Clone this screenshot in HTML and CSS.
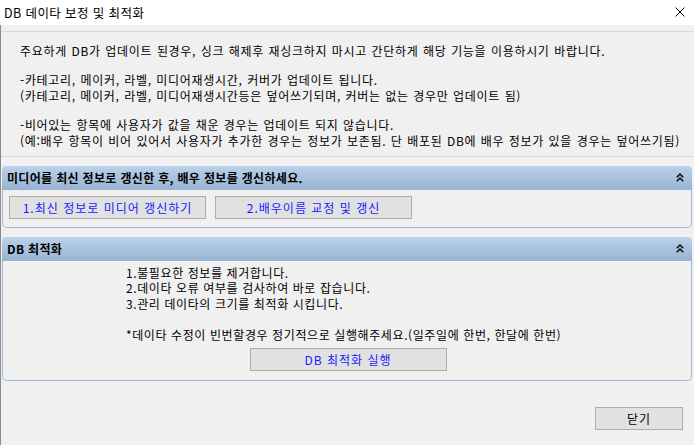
FILE: index.html
```html
<!DOCTYPE html>
<html lang="ko">
<head>
  <meta charset="UTF-8">
  <title>DB 데이타 보정 및 최적화</title>
  <link rel="stylesheet" href="styles.css">
</head>
<body>
  <div class="window">
    <div class="titlebar">
      <span class="title">DB 데이타 보정 및 최적화</span>
      <svg class="close-x" width="10" height="10" viewBox="0 0 10 10">
        <path d="M0.5 0.5 L9.5 9.5 M9.5 0.5 L0.5 9.5" stroke="#000" stroke-width="1" fill="none"/>
      </svg>
    </div>

    <div class="content">
      <div class="intro">
        <p>주요하게 DB가 업데이트 된경우, 싱크 해제후 재싱크하지 마시고 간단하게 해당 기능을 이용하시기 바랍니다.</p>
        <p>-카테고리, 메이커, 라벨, 미디어재생시간, 커버가 업데이트 됩니다.<br>(카테고리, 메이커, 라벨, 미디어재생시간등은 덮어쓰기되며, 커버는 없는 경우만 업데이트 됨)</p>
        <p>-비어있는 항목에 사용자가 값을 채운 경우는 업데이트 되지 않습니다.<br>(예:배우 항목이 비어 있어서 사용자가 추가한 경우는 정보가 보존됨. 단 배포된 DB에 배우 정보가 있을 경우는 덮어쓰기됨)</p>
      </div>

      <div class="panel">
        <div class="panel-head">
          <span>미디어를 최신 정보로 갱신한 후, 배우 정보를 갱신하세요.</span>
          <svg class="chev" width="8" height="9" viewBox="0 0 8 9">
            <path d="M0.8 4.2 L4 1 L7.2 4.2 M0.8 8.2 L4 5 L7.2 8.2" stroke="#000" stroke-width="1.4" fill="none"/>
          </svg>
        </div>
        <div class="panel-body buttons">
          <button class="btn link">1.최신 정보로 미디어 갱신하기</button>
          <button class="btn link">2.배우이름 교정 및 갱신</button>
        </div>
      </div>

      <div class="panel">
        <div class="panel-head">
          <span>DB 최적화</span>
          <svg class="chev" width="8" height="9" viewBox="0 0 8 9">
            <path d="M0.8 4.2 L4 1 L7.2 4.2 M0.8 8.2 L4 5 L7.2 8.2" stroke="#000" stroke-width="1.4" fill="none"/>
          </svg>
        </div>
        <div class="panel-body optimize">
          <div class="notes">
            1.불필요한 정보를 제거합니다.<br>
            2.데이타 오류 여부를 검사하여 바로 잡습니다.<br>
            3.관리 데이타의 크기를 최적화 시킵니다.<br>
            <br>
            *데이타 수정이 빈번할경우 정기적으로 실행해주세요.(일주일에 한번, 한달에 한번)
          </div>
          <button class="btn link run">DB 최적화 실행</button>
        </div>
      </div>

      <div class="footer">
        <button class="btn">닫기</button>
      </div>
    </div>
  </div>
</body>
</html>
```

FILE: styles.css
```css
body { margin: 0; background: #f0f0f0; font-family: "Noto Sans CJK KR", "Noto Sans", sans-serif; font-size: 12px; color: #000; }
.window { width: 694px; height: 445px; overflow: hidden; }
.titlebar { height: 25px; background: #fff; display: flex; align-items: center; justify-content: space-between; padding: 0 9px 0 4px; box-sizing: border-box; }
.title { font-size: 12.5px; line-height: 16px; letter-spacing: 0.4px; }
.close-x { margin-top: -2px; }
.content { border-left: 1px solid #8a8a8a; height: 420px; box-sizing: border-box; padding-top: 6px; }
.intro { border-top: 1px solid #d9d9d9; border-bottom: 1px solid #d9d9d9; padding: 11px 0 6px 19px; letter-spacing: 0.7px; word-spacing: 0.5px; }
.intro p { margin: 0 0 12px; line-height: 16.5px; }
.intro p:last-child { margin-bottom: 0; }
.panel { margin: 9px 2px 0 1px; }
.panel-head { height: 24px; display: flex; align-items: center; justify-content: space-between; padding: 0 8px 0 5px; font-weight: bold; background: linear-gradient(#bad2ea, #98b3d2); border-radius: 4px 4px 0 0; }
.panel-head span { line-height: 16px; letter-spacing: 0.33px; }
.panel-body { border: 1px solid #9fb9d6; border-top: none; border-radius: 0 0 5px 5px; }
.buttons { display: flex; gap: 9px; padding: 6px 0 8px 6px; }
.btn { font-family: inherit; font-size: 12px; height: 23px; background: #e1e1e1; border: 1px solid #adadad; padding: 0; color: #000; letter-spacing: 1px; }
.link { color: #1a1aff; width: 197px; }
.optimize { padding: 4px 0 9px; display: flex; flex-direction: column; align-items: center; }
.notes { align-self: flex-start; margin-left: 123px; line-height: 15.5px; letter-spacing: 0.6px; }
.run { margin-top: 6px; margin-left: 2px; }
.footer { display: flex; justify-content: flex-end; padding: 26px 11px 0 0; }
.footer .btn { width: 88px; }
```
